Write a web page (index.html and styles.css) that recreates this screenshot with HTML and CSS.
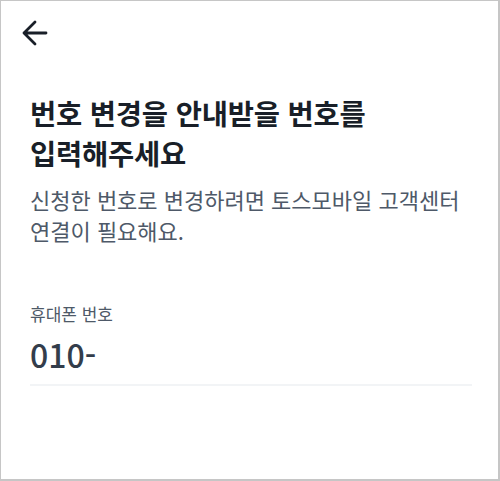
FILE: index.html
```html
<!DOCTYPE html>
<html lang="ko">
<head>
<meta charset="UTF-8">
<meta name="viewport" content="width=device-width, initial-scale=1.0">
<title>휴대폰 번호 입력</title>
<link rel="stylesheet" href="styles.css">
</head>
<body>
    <div class="screen">
        <header class="top-bar">
            <button class="back-btn" type="button" aria-label="뒤로">
                <svg width="28" height="28" viewBox="0 0 28 28" fill="none">
                    <path d="M15 3L4 14L15 25M4 14H26" stroke="#191f28" stroke-width="2.8" stroke-linecap="round" stroke-linejoin="round"/>
                </svg>
            </button>
        </header>

        <section class="content">
            <h1 class="title">번호 변경을 안내받을 번호를<br>입력해주세요</h1>
            <p class="desc">신청한 번호로 변경하려면 토스모바일 고객센터<br>연결이 필요해요.</p>

            <div class="field">
                <label class="field-label" for="phone">휴대폰 번호</label>
                <input class="field-input" id="phone" type="text" value="010-">
            </div>
        </section>
    </div>
</body>
</html>
```

FILE: styles.css
```css
* {
    box-sizing: border-box;
}
body {
    margin: 0;
    padding: 0;
    background: #fff;
    font-family: "Noto Sans CJK KR", "Noto Sans", sans-serif;
}
.screen {
    width: 500px;
    height: 481px;
    border: 1px solid #c6c6c6;
    border-right-width: 2px;
    border-bottom-width: 2px;
    background: #fff;
    overflow: hidden;
}
.top-bar {
    height: 60px;
    padding: 18px 0 0 19px;
}
.back-btn {
    display: block;
    width: 28px;
    height: 28px;
    padding: 0;
    border: 0;
    background: none;
    cursor: pointer;
}
.back-btn svg {
    display: block;
}
.content {
    padding: 32px 26px 0 29px;
}
.title {
    margin: 0;
    font-size: 28.5px;
    line-height: 40px;
    font-weight: 700;
    color: #191f28;
    letter-spacing: -0.2px;
}
.desc {
    margin: 11px 0 0;
    font-size: 22px;
    line-height: 31px;
    font-weight: 400;
    color: #4e5968;
}
.field {
    margin-top: 56px;
}
.field-label {
    display: block;
    font-size: 17px;
    line-height: 24px;
    color: #4e5968;
}
.field-input {
    display: block;
    width: 100%;
    margin-top: 6px;
    padding: 0 0 8px;
    border: 0;
    border-bottom: 2px solid #f2f4f6;
    outline: none;
    background: none;
    font-family: inherit;
    font-size: 32px;
    line-height: 44px;
    height: 54px;
    font-weight: 500;
    color: #333d4b;
}
```
